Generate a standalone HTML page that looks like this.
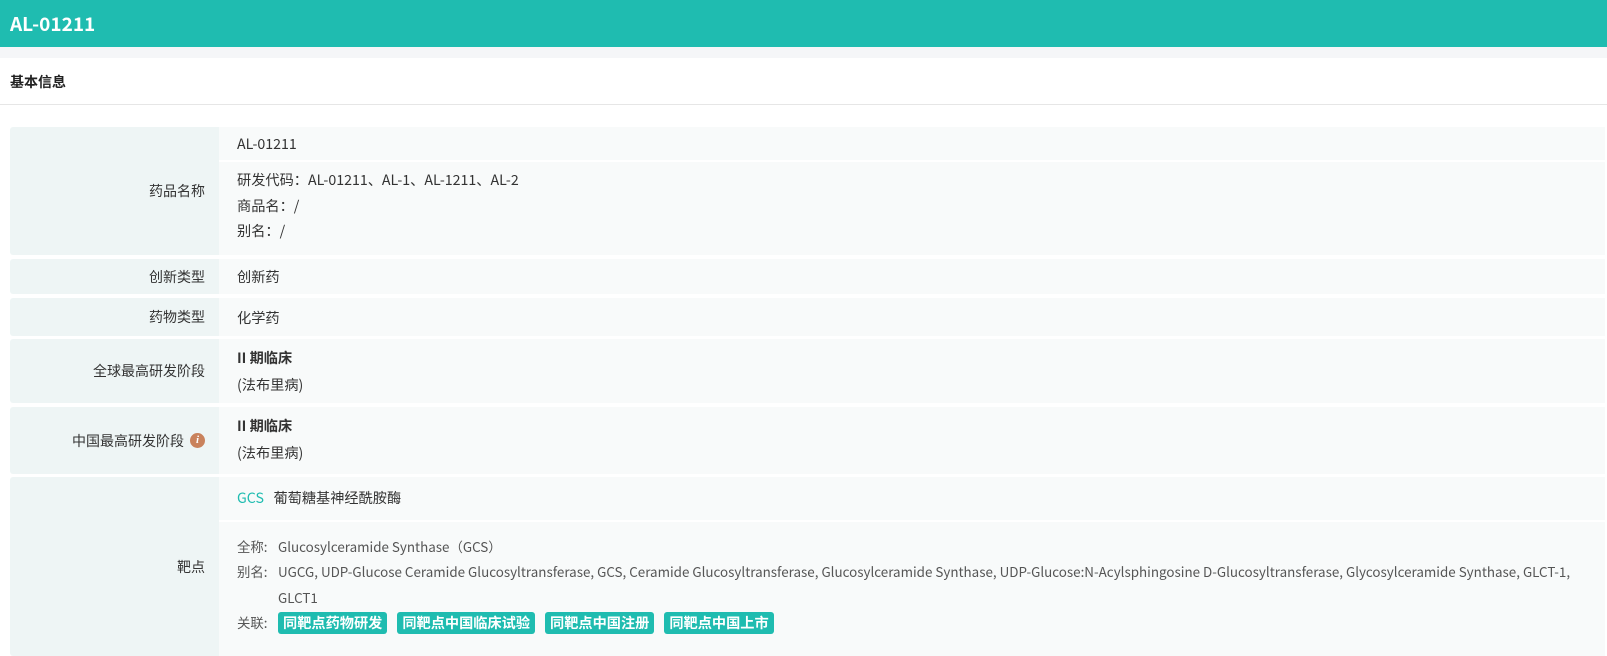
<!DOCTYPE html>
<html><head><meta charset="utf-8"><style>
*{margin:0;padding:0;box-sizing:border-box}
body{width:1607px;height:656px;overflow:hidden;background:#fff;font-family:"Noto Sans CJK SC","Liberation Sans",sans-serif;color:#333;font-size:14px;position:relative}
.hdr{position:absolute;left:0;top:0;width:1607px;height:47px;background:#1fbcb0;color:#fff;font-weight:bold;font-size:19px;line-height:47px;padding-left:10px}
.gap{position:absolute;left:0;top:47px;width:1607px;height:11px;background:#f5f6f8}
.sec{position:absolute;left:10px;top:72px;font-weight:bold;font-size:14px;color:#222;line-height:20px}
.line{position:absolute;left:0;top:104px;width:1607px;height:1px;background:#e6e6e6}
.l{position:absolute;left:10px;width:209px;background:#eef5f5;padding-right:14px;font-size:14px;color:#333;display:flex;align-items:center;justify-content:flex-end;border-radius:3px 0 0 3px}
.v{position:absolute;left:219px;width:1386px;background:#f8fafa}
.t{position:absolute;white-space:nowrap;line-height:20px;font-size:14.2px}
.b{font-weight:bold}
.tag{display:inline-block;background:#1fbcb0;color:#fff;font-weight:bold;border-radius:3px;padding:0 5px;height:22px;line-height:22px;margin-right:10px;font-size:14.2px;vertical-align:middle}
.i{display:inline-block;width:15px;height:15px;border-radius:50%;background:#c9825c;color:#fff;font-size:11px;font-style:italic;font-family:"Liberation Serif",serif;font-weight:bold;text-align:center;line-height:15px;margin-left:6px}
.g{color:#555;font-size:13.4px}
</style></head><body>
<div class="hdr">AL-01211</div>
<div class="gap"></div>
<div class="sec">基本信息</div>
<div class="line"></div>

<div class="l" style="top:127px;height:128px">药品名称</div>
<div class="v" style="top:127px;height:33px"></div>
<div class="v" style="top:162px;height:93px"></div>
<div class="t" style="left:237px;top:134px">AL-01211</div>
<div class="t" style="left:237px;top:170px">研发代码：AL-01211、AL-1、AL-1211、AL-2</div>
<div class="t" style="left:237px;top:196px">商品名：/</div>
<div class="t" style="left:237px;top:221px">别名：/</div>

<div class="l" style="top:259px;height:35px">创新类型</div>
<div class="v" style="top:259px;height:35px"></div>
<div class="t" style="left:237px;top:267px">创新药</div>

<div class="l" style="top:298px;height:38px">药物类型</div>
<div class="v" style="top:298px;height:38px"></div>
<div class="t" style="left:237px;top:308px">化学药</div>

<div class="l" style="top:339px;height:64px">全球最高研发阶段</div>
<div class="v" style="top:339px;height:64px"></div>
<div class="t b" style="left:237px;top:348px">II 期临床</div>
<div class="t" style="left:237px;top:375px">(法布里病)</div>

<div class="l" style="top:407px;height:67px">中国最高研发阶段<span class="i">i</span></div>
<div class="v" style="top:407px;height:67px"></div>
<div class="t b" style="left:237px;top:416px">II 期临床</div>
<div class="t" style="left:237px;top:443px">(法布里病)</div>

<div class="l" style="top:477px;height:179px">靶点</div>
<div class="v" style="top:477px;height:43px"></div>
<div class="v" style="top:522px;height:134px"></div>
<div class="t" style="left:237px;top:488px"><span style="color:#1fbcb0">GCS</span>&nbsp;&nbsp; 葡萄糖基神经酰胺酶</div>
<div class="t g" style="left:237px;top:536px">全称:</div><div class="t g" style="left:278px;top:536px">Glucosylceramide Synthase（GCS）</div>
<div class="t g" style="left:237px;top:561px">别名:</div><div class="t g" style="left:278px;top:561px">UGCG, UDP-Glucose Ceramide Glucosyltransferase, GCS, Ceramide Glucosyltransferase, Glucosylceramide Synthase, UDP-Glucose:N-Acylsphingosine D-Glucosyltransferase, Glycosylceramide Synthase, GLCT-1,</div>
<div class="t g" style="left:278px;top:587px">GLCT1</div>
<div class="t g" style="left:237px;top:612px">关联:</div>
<div class="t" style="left:278px;top:611px;line-height:22px"><span class="tag">同靶点药物研发</span><span class="tag">同靶点中国临床试验</span><span class="tag">同靶点中国注册</span><span class="tag">同靶点中国上市</span></div>
</body></html>
